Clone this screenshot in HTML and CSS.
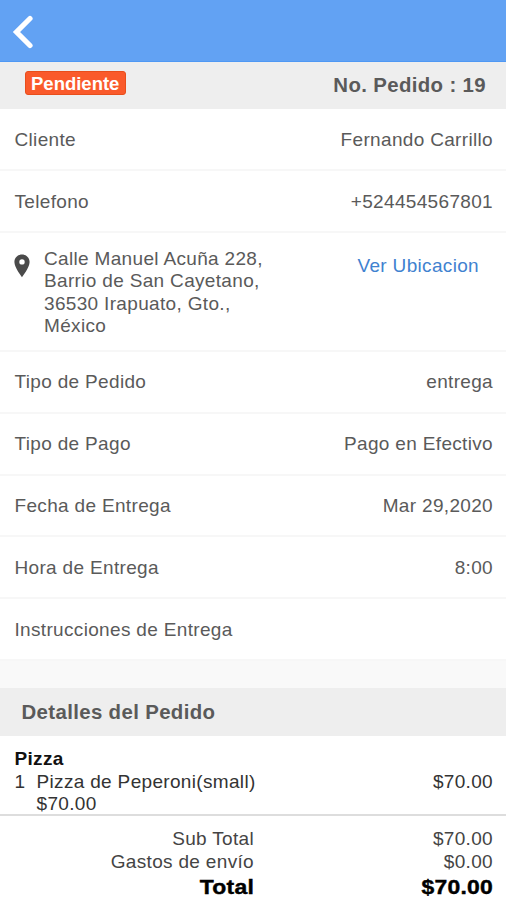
FILE: index.html
```html
<!DOCTYPE html>
<html lang="es">
<head>
<meta charset="utf-8">
<title>Pedido 19</title>
<link rel="stylesheet" href="styles.css">
</head>
<body>
<header class="topbar">
  <svg class="back" viewBox="0 0 22 34" width="22" height="34"><path d="M19 3.500 L5.500 17 L19 30.500" fill="none" stroke="#fff" stroke-width="5.200" stroke-linecap="round" stroke-linejoin="miter"/></svg>
</header>
<div class="order-head">
  <span class="badge">Pendiente</span>
  <span class="order-number">No. Pedido : 19</span>
</div>
<main>
  <div class="row"><span>Cliente</span><span>Fernando Carrillo</span></div>
  <div class="row"><span>Telefono</span><span>+524454567801</span></div>
  <div class="row address">
    <svg class="pin" viewBox="0 0 16 24" width="16" height="24"><path fill="#4a4a4a" fill-rule="evenodd" d="M8 .5C3.700.5.4 3.800.4 8c0 5.500 7.600 15.200 7.600 15.200S15.600 13.500 15.600 8C15.600 3.800 12.300.5 8 .5zM8 5.200a2.700 2.700 0 1 1 0 5.400a2.700 2.700 0 0 1 0-5.400z"/></svg>
    <p class="address-text">Calle Manuel Acuña 228, Barrio de San Cayetano, 36530 Irapuato, Gto., México</p>
    <a class="map-link">Ver Ubicacion</a>
  </div>
  <div class="row"><span>Tipo de Pedido</span><span>entrega</span></div>
  <div class="row"><span>Tipo de Pago</span><span>Pago en Efectivo</span></div>
  <div class="row"><span>Fecha de Entrega</span><span>Mar 29,2020</span></div>
  <div class="row"><span>Hora de Entrega</span><span>8:00</span></div>
  <div class="row"><span>Instrucciones de Entrega</span></div>
</main>
<h2 class="section-title">Detalles del Pedido</h2>
<section class="items">
  <div class="category">Pizza</div>
  <div class="item">
    <span>1</span>
    <span>Pizza de Peperoni(small)<br>$70.00</span>
    <span class="amount">$70.00</span>
  </div>
</section>
<section class="totals">
  <span>Sub Total</span><span>$70.00</span>
  <span>Gastos de envío</span><span>$0.00</span>
  <strong>Total</strong><strong>$70.00</strong>
</section>
</body>
</html>
```

FILE: styles.css
```css
* { box-sizing: border-box; }
body {
  margin: 0;
  height: 900px;
  overflow: hidden;
  background: #f9f9f9;
  color: #5a5a5a;
  font: 19px/22.5px "Liberation Sans", Arial, sans-serif;
  letter-spacing: 0.33px;
}
.topbar {
  height: 62px;
  padding: 15px 0 0 11px;
  background: #62a2f3;
  border-bottom: 1px solid #4f98f4;
}
.back { display: block; }
.order-head {
  height: 47px;
  padding: 9px 20px 0 24.5px;
  display: flex;
  justify-content: space-between;
  align-items: flex-start;
  background: #eee;
}
.badge {
  height: 24px;
  padding: 0 6px 0 5.5px;
  border: 1px solid #e84e1c;
  border-radius: 3px;
  background: #fa5a2b;
  color: #fff;
  font-weight: bold;
  font-size: 18.5px;
  line-height: 23px;
  letter-spacing: 0;
}
.order-number {
  font-size: 20.4px;
  font-weight: bold;
  line-height: 28px;
  letter-spacing: 0.36px;
}
.row {
  height: 61.9px;
  padding: 2px 13px 0 14.5px;
  display: flex;
  justify-content: space-between;
  align-items: center;
  background: #fff;
  border-bottom: 2px solid #f7f7f7;
}
.address {
  height: 119px;
  padding: 15px 27px 0 14px;
  align-items: flex-start;
}
.pin { margin-top: 6px; }
.address-text { width: 230px; margin: 0 auto 0 14px; }
.map-link { margin-top: 7px; color: #3f82d0; }
.section-title {
  height: 48px;
  margin: 27px 0 0;
  padding-left: 21.5px;
  background: #eee;
  font-size: 20.4px;
  line-height: 48px;
  letter-spacing: 0.36px;
}
.items {
  height: 80px;
  padding: 12px 13px 0 14.5px;
  background: #fff;
  color: #333;
  border-bottom: 2px solid #ddd;
}
.category { color: #111; font-weight: bold; }
.item { display: grid; grid-template-columns: 22px 1fr auto; }
.totals {
  height: 84px;
  padding: 12px 13px 0 14px;
  display: grid;
  grid-template-columns: 240px 1fr;
  grid-template-rows: 22.5px 22.5px 27px;
  text-align: right;
  background: #fff;
  color: #444;
}
.totals strong {
  color: #000;
  font-size: 19.6px;
  line-height: 28px;
  letter-spacing: 0.2px;
  transform: scaleX(1.17);
  transform-origin: right;
  -webkit-text-stroke: 0.4px #000;
}
```
